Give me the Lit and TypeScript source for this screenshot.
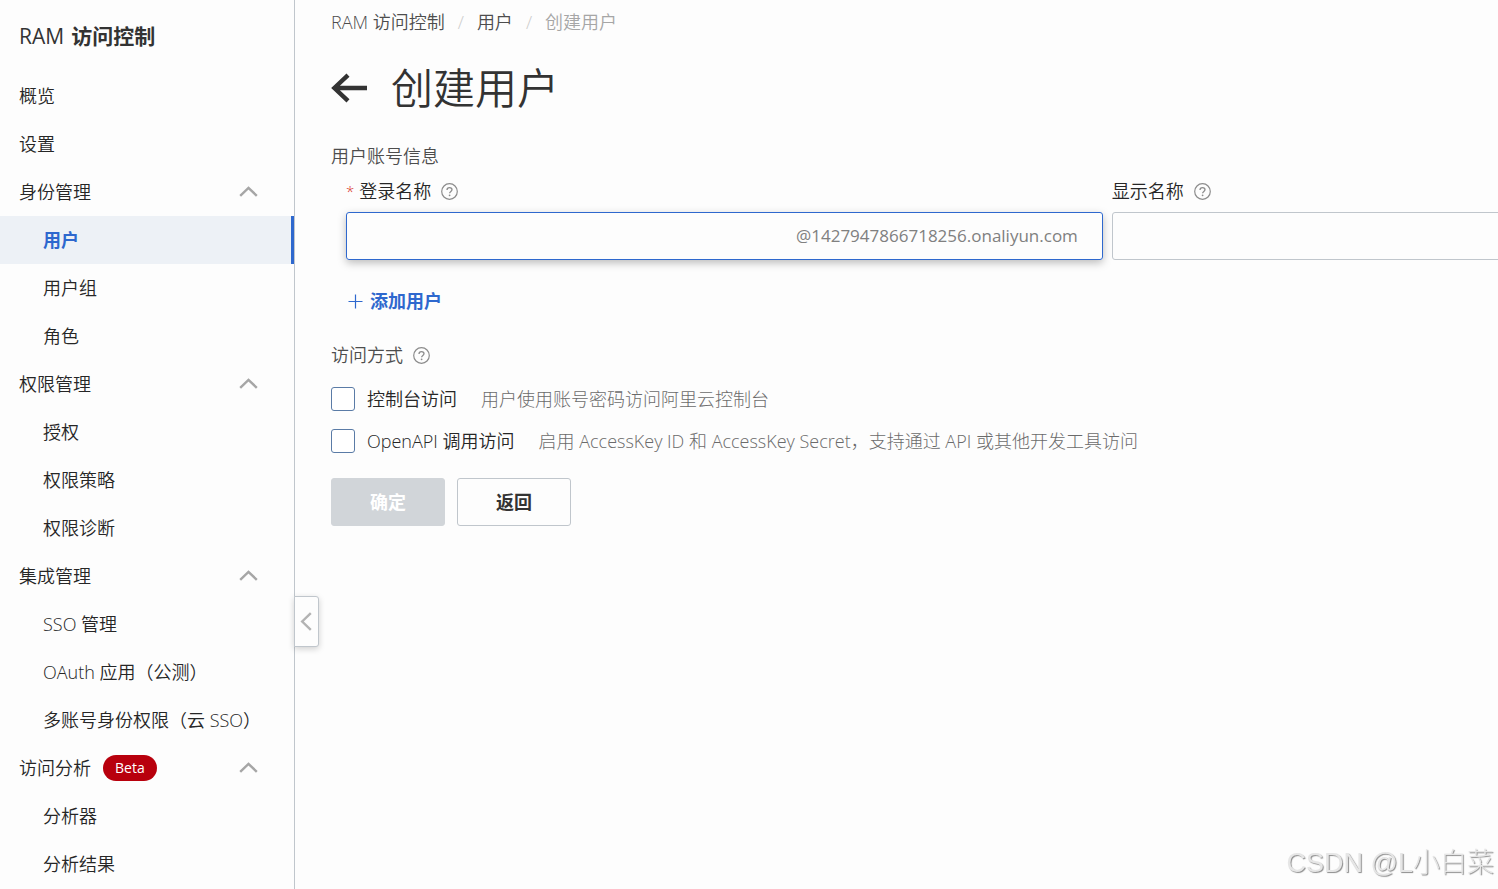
import { LitElement, html, css, svg } from "lit";
import { customElement, state } from "lit/decorators.js";
import { classMap } from "lit/directives/class-map.js";

interface NavLeaf {
  label: string;
  active?: boolean;
}

interface NavGroup {
  label: string;
  badge?: string;
  children?: NavLeaf[];
}

const NAV: NavGroup[] = [
  { label: "概览" },
  { label: "设置" },
  {
    label: "身份管理",
    children: [{ label: "用户", active: true }, { label: "用户组" }, { label: "角色" }],
  },
  {
    label: "权限管理",
    children: [{ label: "授权" }, { label: "权限策略" }, { label: "权限诊断" }],
  },
  {
    label: "集成管理",
    children: [
      { label: "SSO 管理" },
      { label: "OAuth 应用（公测）" },
      { label: "多账号身份权限（云 SSO）" },
    ],
  },
  {
    label: "访问分析",
    badge: "Beta",
    children: [{ label: "分析器" }, { label: "分析结果" }],
  },
];

const helpShape = svg`
  <circle cx="8.5" cy="8.5" r="7.8" fill="none" stroke="currentColor" stroke-width="1.2" />
  <path d="M6 7.1C6 5.6 7 4.6 8.5 4.6S11 5.6 11 6.8C11 8.4 8.6 8.5 8.6 10.3" fill="none" stroke="currentColor" stroke-width="1.3" />
  <circle cx="8.6" cy="12.3" r="0.9" fill="currentColor" />
`;

@customElement("help-tip")
export class HelpTip extends LitElement {
  static styles = css`
    :host {
      display: inline-flex;
    }
    .tip {
      display: flex;
      padding: 0;
      border: 0;
      background: none;
      color: #8c8c8c;
      cursor: pointer;
    }
  `;

  render() {
    return html`<button class="tip" type="button" aria-label="帮助">
      <svg width="17" height="17" viewBox="0 0 17 17" aria-hidden="true">${helpShape}</svg>
    </button>`;
  }
}

@customElement("side-nav")
export class SideNav extends LitElement {
  static styles = css`
    :host {
      display: block;
      position: relative;
      border-right: 1px solid #c0c6cc;
    }
    .title {
      display: flex;
      align-items: center;
      gap: 7px;
      height: 72px;
      margin: 0;
      padding-left: 19px;
      color: #333;
      font-size: 21px;
      font-weight: 700;
    }
    .latin {
      font-weight: 400;
    }
    .list {
      margin: 0;
      padding: 0;
      list-style: none;
    }
    .row {
      display: flex;
      align-items: center;
      box-sizing: border-box;
      width: 100%;
      height: 48px;
      padding: 0 36px 0 19px;
      border: 0;
      background: none;
      color: inherit;
      font: inherit;
      text-align: left;
      text-decoration: none;
      white-space: nowrap;
      cursor: pointer;
    }
    .leaf {
      padding: 0 0 0 43px;
    }
    .active {
      border-right: 3px solid #2e68ce;
      background: #edf1f6;
      color: #2e68ce;
      font-weight: 700;
    }
    .badge {
      margin-left: 12px;
      padding: 0 12px;
      border-radius: 13px;
      background: #b8000d;
      color: #fff;
      font-size: 14px;
      font-weight: 400;
      line-height: 26px;
    }
    .chevron {
      margin-left: auto;
    }
    .closed {
      transform: rotate(180deg);
    }
    .handle {
      position: absolute;
      top: 67%;
      left: 100%;
      display: flex;
      align-items: center;
      justify-content: center;
      box-sizing: border-box;
      width: 25px;
      height: 51px;
      padding: 0 2px 0 0;
      border: 1px solid #c0c6cc;
      border-radius: 0 3px 3px 0;
      background: #fdfdfd;
      box-shadow: 0 2px 6px rgba(0, 0, 0, 0.18);
      cursor: pointer;
    }
  `;

  @state() private closed = new Set<string>();

  private toggle(label: string) {
    const next = new Set(this.closed);
    if (!next.delete(label)) next.add(label);
    this.closed = next;
  }

  private renderGroup(group: NavGroup) {
    if (!group.children) {
      return html`<li><a class="row" href="#">${group.label}</a></li>`;
    }
    const closed = this.closed.has(group.label);
    return html`<li>
      <button
        class="row"
        type="button"
        aria-expanded=${closed ? "false" : "true"}
        @click=${() => this.toggle(group.label)}
      >
        <span>${group.label}</span>
        ${group.badge ? html`<span class="badge">${group.badge}</span>` : null}
        <svg class=${classMap({ chevron: true, closed })} width="19" height="12" viewBox="0 0 19 12" aria-hidden="true">
          <path d="M1.2 9.8 9.5 1.8 17.8 9.8" fill="none" stroke="#a6a6a6" stroke-width="2.4" />
        </svg>
      </button>
      ${closed
        ? null
        : html`<ul class="list">
            ${group.children.map(
              (leaf) => html`<li>
                <a class=${classMap({ row: true, leaf: true, active: !!leaf.active })} href="#">${leaf.label}</a>
              </li>`
            )}
          </ul>`}
    </li>`;
  }

  render() {
    return html`
      <h2 class="title"><span class="latin">RAM</span> <span>访问控制</span></h2>
      <nav aria-label="RAM 访问控制">
        <ul class="list">
          ${NAV.map((group) => this.renderGroup(group))}
        </ul>
      </nav>
      <button class="handle" type="button" aria-label="收起菜单">
        <svg width="12" height="19" viewBox="0 0 12 19" aria-hidden="true">
          <path d="M10.8 1.2 2.2 9.5 10.8 17.8" fill="none" stroke="#b3b3b3" stroke-width="2.4" />
        </svg>
      </button>
    `;
  }
}

@customElement("app-root")
export class AppRoot extends LitElement {
  static styles = css`
    :host {
      display: grid;
      grid-template-columns: 295px minmax(0, 1fr);
      min-height: 100vh;
      background: #fdfdfd;
      color: #262626;
      font-family: "Open Sans", "Noto Sans CJK SC", sans-serif;
      font-size: 18px;
      font-weight: 350;
      line-height: 24px;
    }
    .main {
      padding: 10px 0 0 36px;
      overflow: hidden;
    }
    .crumbs {
      display: flex;
      margin: 0;
      padding: 0;
      list-style: none;
      color: #4d4d4d;
    }
    .crumb + .crumb::before {
      content: "/";
      padding: 0 13px;
      color: #ccc;
    }
    .crumb a {
      color: inherit;
      text-decoration: none;
    }
    .current {
      color: #a6a6a6;
    }
    .heading {
      display: flex;
      align-items: center;
      gap: 23px;
      margin: 24px 0 26px;
    }
    .back {
      display: flex;
      padding: 0;
      border: 0;
      background: none;
      color: #333;
      cursor: pointer;
    }
    .page-title {
      margin: 0;
      color: #333;
      font-size: 42px;
      font-weight: 350;
      line-height: 60px;
    }
    .section {
      display: flex;
      align-items: center;
      gap: 10px;
      margin: 0;
      color: #4d4d4d;
      font-size: 18px;
      font-weight: 350;
    }
    .fields {
      display: flex;
      gap: 9px;
      margin-top: 11px;
      padding-left: 15px;
    }
    .field {
      flex: 0 0 65.7%;
    }
    .label {
      display: flex;
      align-items: center;
      gap: 10px;
      height: 24px;
      margin-bottom: 9px;
    }
    .required {
      margin-right: 5px;
      color: #d93026;
      font-size: 15px;
      vertical-align: top;
    }
    .box {
      display: flex;
      align-items: center;
      box-sizing: border-box;
      height: 48px;
      padding: 0 24px 0 12px;
      border: 1px solid #c0c6cc;
      border-radius: 3px;
    }
    .focused {
      border-color: #2e68ce;
      box-shadow: 0 3px 9px rgba(0, 0, 0, 0.26);
    }
    .input {
      flex: 1;
      min-width: 0;
      padding: 0;
      border: 0;
      outline: 0;
      background: none;
      color: inherit;
      font: inherit;
    }
    .suffix {
      color: #808080;
      font-size: 17px;
      font-weight: 400;
    }
    .add {
      display: flex;
      align-items: center;
      gap: 7px;
      margin: 29px 0 30px 17px;
      padding: 0;
      border: 0;
      background: none;
      color: #2e68ce;
      font: inherit;
      font-weight: 700;
      cursor: pointer;
    }
    .option {
      display: flex;
      align-items: center;
      margin-top: 18px;
    }
    .options {
      padding-top: 2px;
    }
    .check {
      appearance: none;
      box-sizing: border-box;
      width: 24px;
      height: 24px;
      margin: 0 12px 0 0;
      border: 1px solid #5a7ba6;
      border-radius: 3px;
      background: #fff;
    }
    .check:checked {
      background: #2e68ce;
    }
    .hint {
      margin-left: 24px;
      color: #6b6b6b;
      font-weight: 300;
    }
    .actions {
      display: flex;
      gap: 12px;
      margin-top: 25px;
    }
    .btn {
      min-width: 114px;
      height: 48px;
      border: 1px solid #c0c6cc;
      border-radius: 3px;
      background: #fdfdfd;
      color: #333;
      font: inherit;
      font-weight: 700;
    }
    .btn:disabled {
      border-color: #d1d5d9;
      background: #d1d5d9;
      color: #fff;
    }
    .watermark {
      position: fixed;
      right: 4px;
      bottom: 6px;
      color: #e6e6e6;
      font-family: "Liberation Sans", "Noto Sans CJK SC", sans-serif;
      font-size: 27px;
      font-weight: 300;
      line-height: 40px;
      text-shadow: 1px 1px 1px #8c8c8c;
      pointer-events: none;
    }
  `;

  render() {
    return html`
      <side-nav></side-nav>
      <main class="main">
        <nav aria-label="面包屑">
          <ol class="crumbs">
            <li class="crumb"><a href="#">RAM 访问控制</a></li>
            <li class="crumb"><a href="#">用户</a></li>
            <li class="crumb current" aria-current="page">创建用户</li>
          </ol>
        </nav>
        <div class="heading">
          <button class="back" type="button" aria-label="返回上一页">
            <svg width="37" height="30" viewBox="0 0 37 30" aria-hidden="true">
              <path d="M17 2.2 3.4 15 17 27.8M3.4 15H36" fill="none" stroke="currentColor" stroke-width="4.4" />
            </svg>
          </button>
          <h1 class="page-title">创建用户</h1>
        </div>
        <form @submit=${(e: Event) => e.preventDefault()}>
          <h2 class="section">用户账号信息</h2>
          <div class="fields">
            <div class="field">
              <div class="label">
                <label for="login"><span class="required">*</span>登录名称</label>
                <help-tip></help-tip>
              </div>
              <div class="box focused">
                <input class="input" id="login" type="text" required />
                <span class="suffix">@1427947866718256.onaliyun.com</span>
              </div>
            </div>
            <div class="field">
              <div class="label">
                <label for="display">显示名称</label>
                <help-tip></help-tip>
              </div>
              <div class="box">
                <input class="input" id="display" type="text" />
              </div>
            </div>
          </div>
          <button class="add" type="button">
            <svg width="15" height="15" viewBox="0 0 15 15" aria-hidden="true">
              <path d="M7.5 0.5V14.5M0.5 7.5H14.5" fill="none" stroke="currentColor" stroke-width="1.2" />
            </svg>
            添加用户
          </button>
          <h2 class="section">访问方式 <help-tip></help-tip></h2>
          <div class="options">
            <div class="option">
              <input class="check" id="console" type="checkbox" />
              <label for="console">控制台访问</label>
              <span class="hint">用户使用账号密码访问阿里云控制台</span>
            </div>
            <div class="option">
              <input class="check" id="openapi" type="checkbox" />
              <label for="openapi">OpenAPI 调用访问</label>
              <span class="hint">启用 AccessKey ID 和 AccessKey Secret，支持通过 API 或其他开发工具访问</span>
            </div>
          </div>
          <div class="actions">
            <button class="btn" type="submit" disabled>确定</button>
            <button class="btn" type="button">返回</button>
          </div>
        </form>
      </main>
      <div class="watermark">CSDN @L小白菜</div>
    `;
  }
}
